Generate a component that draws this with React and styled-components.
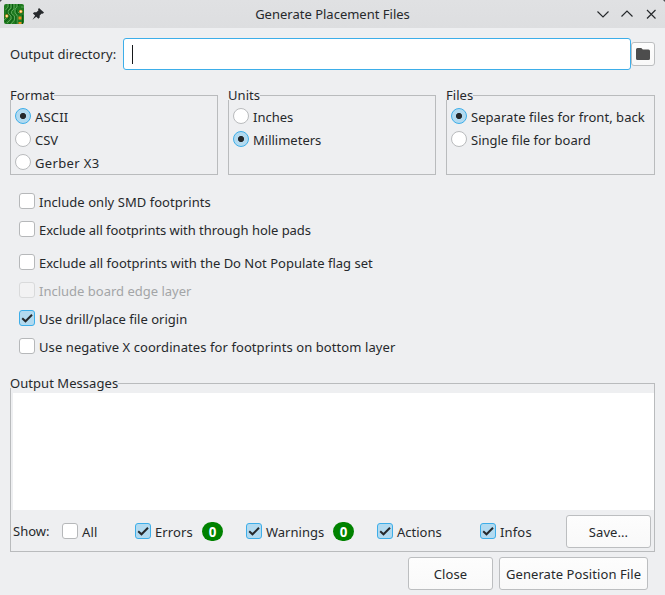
import React from "react";
import styled, { createGlobalStyle } from "styled-components";

const Global = createGlobalStyle`
  * { box-sizing: border-box; }
  body { margin: 0; background: #eeeff1; }
`;

const Dialog = styled.main`
  width: 665px;
  height: 595px;
  overflow: hidden;
  display: flex;
  flex-direction: column;
  background: #eeeff1;
  color: #26292c;
  font: 13px/18px "Noto Sans", sans-serif;
  white-space: nowrap;
`;

const TitleBar = styled.header`
  flex: none;
  height: 28px;
  display: grid;
  grid-template-columns: 66px 1fr 66px;
  align-items: center;
  padding: 0 6px 0 4px;
  background: linear-gradient(#e0e1e3, #dddee0);
  clip-path: polygon(2px 0, 663px 0, 665px 2px, 665px 28px, 0 28px, 0 2px);
`;

const TitleBacking = styled.div`
  flex: none;
  height: 28px;
  background: #4b4d50;
`;

const TitleIcons = styled.div`
  display: flex;
  align-items: center;
  gap: 7px;
  svg { display: block; flex: none; }
`;

const Title = styled.h1`
  margin: 0;
  padding-left: 2px;
  font-size: 13px;
  font-weight: 400;
  text-align: center;
`;

const WindowButtons = styled(TitleIcons)`
  justify-content: flex-end;
  gap: 8px;
`;

const DirectoryRow = styled.div`
  flex: none;
  display: flex;
  align-items: center;
  height: 32px;
  margin: 10px 10px 0;
`;

const DirectoryLabel = styled.label`
  width: 113px;
  letter-spacing: 0.07px;
`;

const DirectoryField = styled.div`
  flex: 1;
  height: 32px;
  padding: 6px 0 0 8px;
  background: #fff;
  border: 1px solid #3daee9;
  border-radius: 3px;
`;

const Caret = styled.div`
  width: 1px;
  height: 19px;
  background: #16181a;
`;

const BrowseButton = styled.button`
  width: 24px;
  height: 24px;
  padding: 0;
  display: grid;
  place-items: center;
  border: 1px solid #bcbec0;
  border-radius: 3px;
  background: linear-gradient(#fdfdfd, #f8f8f8);
`;

const Groups = styled.div`
  flex: none;
  display: grid;
  grid-template-columns: 208px 208px 209px;
  gap: 10px;
  margin: 25px 10px 0;
`;

const Group = styled.section`
  height: ${(p) => p.$height}px;
  display: flex;
  flex-direction: column;
  align-items: flex-start;
  border: 1px solid #b9bbbd;
`;

const GroupTitle = styled.h2`
  margin: -10px 0 0 -1px;
  height: 14px;
  line-height: 18px;
  font-size: 13px;
  font-weight: 400;
  letter-spacing: 0.05px;
  background: #eeeff1;
`;

const RadioList = styled.div`
  display: grid;
  grid-auto-rows: 23px;
  margin: 4px 0 0 4px;
`;

const Option = styled.label`
  display: flex;
  align-items: center;
  gap: 4px;
  height: ${(p) => p.$height || 23}px;
  color: ${(p) => (p.$disabled ? "#a3a5a7" : "inherit")};
`;

const OptionText = styled.span`
  padding-top: 2px;
  letter-spacing: ${(p) => p.$tracking || 0}px;
`;

const RadioMark = styled.span`
  width: 16px;
  height: 16px;
  border-radius: 50%;
  border: 1px solid ${(p) => (p.$on ? "#3daee9" : "#b9bbbd")};
  background: ${(p) =>
    p.$on ? "radial-gradient(circle, #26292c 2.7px, #b2daf0 3.5px)" : "#fff"};
`;

const CheckMark = styled.span`
  width: 16px;
  height: 16px;
  display: block;
  border-radius: 3px;
  border: 1px solid
    ${(p) => (p.$on ? "#3daee9" : p.$disabled ? "#d9dadb" : "#b6b8ba")};
  background: ${(p) => (p.$on ? "#b2daf0" : p.$disabled ? "#f2f2f3" : "#fff")};
  svg { display: block; }
`;

const Checks = styled.div`
  flex: none;
  display: grid;
  grid-template-rows: 28px 33px 28px 28px 28px 16px;
  align-items: start;
  margin: 18px 10px 0 19px;
`;

const MessagesWrap = styled.div`
  flex: none;
  margin: 29px 10px 0;
`;

const MessageArea = styled.div`
  flex: none;
  align-self: stretch;
  height: 117px;
  margin: 5px 0 0 2px;
  background: #fff;
`;

const FilterBar = styled.div`
  align-self: stretch;
  flex: 1;
  display: grid;
  grid-template-columns: 49px 73px 111px 131px 103px 86px 85px;
  align-items: center;
  padding: 0 0 0 2px;
  margin-top: 1px;
`;

const Filter = styled.div`
  display: flex;
  align-items: center;
  justify-content: space-between;
  width: ${(p) => p.$width}px;
`;

const Badge = styled.span`
  width: 21px;
  height: 19px;
  border-radius: 10px;
  background: #008200;
  color: #fff;
  font-size: 13.33px;
  font-weight: 700;
  text-align: center;
  line-height: 20px;
`;

const Button = styled.button`
  width: ${(p) => p.$width}px;
  height: 33px;
  padding: 1px 0 0;
  border: 1px solid #bcbec0;
  border-radius: 3px;
  background: linear-gradient(#fdfdfd, #f9f9f9);
  color: inherit;
  font: inherit;
  letter-spacing: 0.08px;
`;

const Actions = styled.footer`
  display: flex;
  justify-content: flex-end;
  gap: 6px;
  padding: 5px 17px 0 0;
`;

const BoardIcon = () => (
  <svg width="20" height="20" viewBox="0 0 20 20">
    <rect width="20" height="20" rx="2" fill="#1f7a1f" />
    <g fill="none" stroke="#5ba558" strokeWidth="1">
      <path d="M4 0v3L1.500 6M7 0v4L4 7v2L7 12v3L3 19M10 0v5L7.500 7.500v2L10.500 12v4L7 20M13 0v3l-2 2v4l2 2v9M20 3h-3M20 10h-4l-2-2M0 16l3-3" />
    </g>
    <g fill="none" stroke="#0a5a12" strokeWidth="1">
      <path d="M5.500 0v3L3 6v4l2 2v2L1 18M8.500 0v4.500L6 7v2.500L9 13v2L5 20M14.500 0v2M12.500 6v2l2 2h5M12 12v8M18.500 11v9" />
    </g>
    <g fill="#e98b20">
      <circle cx="2.800" cy="12" r="1.700" />
      <circle cx="16.800" cy="7.500" r="1.700" />
      <rect x="14.500" y="12.500" width="3" height="3" />
      <rect x="14.500" y="18" width="3" height="2" />
    </g>
    <g fill="#fff0b5">
      <circle cx="2.800" cy="12" r="1" />
      <circle cx="16.800" cy="7.500" r="1" />
    </g>
  </svg>
);

const PinIcon = () => (
  <svg width="14" height="14" viewBox="0 0 14 14" fill="#26292c">
    <path d="M8 1 13 5.500 11.800 6.800 10.800 6.400 8.700 8.600 8.700 10.600 7.400 11.700 5.300 9.700 1.500 12.700 4.100 8.600 1.900 6.500 3.100 5.200 5.400 5.300 7.500 3.300 7 2.200Z" />
  </svg>
);

const WindowIcon = ({ d }) => (
  <svg width="16" height="16" viewBox="0 0 16 16" fill="none" stroke="#26292c" strokeWidth="1.150">
    <path d={d} />
  </svg>
);

const Tick = () => (
  <svg width="14" height="14" viewBox="0 0 14 14" fill="none" stroke="#26292c" strokeWidth="2">
    <path d="M2.200 7.200 5.500 10.300 12 3.800" />
  </svg>
);

const Check = ({ label, on, disabled, tracking, height = 16 }) => (
  <Option $height={height} $disabled={disabled}>
    <CheckMark $on={on} $disabled={disabled}>{on && <Tick />}</CheckMark>
    <OptionText $tracking={tracking}>{label}</OptionText>
  </Option>
);

const RadioGroup = ({ title, options, selected }) => (
  <Group $height={80}>
    <GroupTitle>{title}</GroupTitle>
    <RadioList>
      {options.map(({ label, tracking }) => (
        <Option key={label}>
          <RadioMark $on={label === selected} />
          <OptionText $tracking={tracking}>{label}</OptionText>
        </Option>
      ))}
    </RadioList>
  </Group>
);

const formats = [
  { label: "ASCII", tracking: 0.2 },
  { label: "CSV" },
  { label: "Gerber X3", tracking: 0.35 },
];
const units = [{ label: "Inches" }, { label: "Millimeters" }];
const files = [
  { label: "Separate files for front, back", tracking: 0.05 },
  { label: "Single file for board" },
];

export default function App() {
  return (
    <Dialog>
      <Global />
      <TitleBacking>
        <TitleBar>
          <TitleIcons>
            <BoardIcon />
            <PinIcon />
          </TitleIcons>
          <Title>Generate Placement Files</Title>
          <WindowButtons>
            <WindowIcon d="M2.500 5.500 8 11l5.500-5.500" />
            <WindowIcon d="M2.500 10.500 8 5l5.500 5.500" />
            <WindowIcon d="m4 4 8.500 8.500M12.500 4 4 12.500" />
          </WindowButtons>
        </TitleBar>
      </TitleBacking>
      <DirectoryRow>
        <DirectoryLabel>Output directory:</DirectoryLabel>
        <DirectoryField><Caret /></DirectoryField>
        <BrowseButton aria-label="Browse">
          <svg width="16" height="16" viewBox="0 0 16 16" fill="#4d4d4d">
            <path d="M2.500 2h3.800l1.500 1.500H13.500A1.500 1.500 0 0 1 15 5v7.500a1.500 1.500 0 0 1-1.500 1.500h-11A1.500 1.500 0 0 1 1 12.500v-9A1.500 1.500 0 0 1 2.500 2Z" />
          </svg>
        </BrowseButton>
      </DirectoryRow>
      <Groups>
        <RadioGroup title="Format" options={formats} selected="ASCII" />
        <RadioGroup title="Units" options={units} selected="Millimeters" />
        <RadioGroup title="Files" options={files} selected="Separate files for front, back" />
      </Groups>
      <Checks>
        <Check label="Include only SMD footprints" tracking={0.05} />
        <Check label="Exclude all footprints with through hole pads" tracking={-0.04} />
        <Check label="Exclude all footprints with the Do Not Populate flag set" />
        <Check label="Include board edge layer" disabled />
        <Check label="Use drill/place file origin" on />
        <Check label="Use negative X coordinates for footprints on bottom layer" tracking={0.08} />
      </Checks>
      <MessagesWrap>
        <Group $height={169}>
          <GroupTitle>Output Messages</GroupTitle>
          <MessageArea />
          <FilterBar>
            <span>Show:</span>
            <Check label="All" tracking={0.2} />
            <Filter $width={88}><Check label="Errors" on tracking={0.1} /><Badge>0</Badge></Filter>
            <Filter $width={108}><Check label="Warnings" on /><Badge>0</Badge></Filter>
            <Check label="Actions" on />
            <Check label="Infos" on tracking={0.15} />
            <Button $width={85}>Save...</Button>
          </FilterBar>
        </Group>
      </MessagesWrap>
      <Actions>
        <Button $width={85}>Close</Button>
        <Button $width={149}>Generate Position File</Button>
      </Actions>
    </Dialog>
  );
}
